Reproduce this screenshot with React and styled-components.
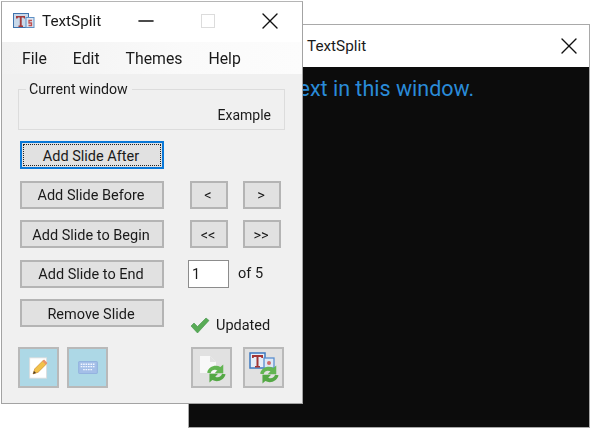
import React from 'react'
import styled, { createGlobalStyle } from 'styled-components'
import { FiX, FiMinus } from 'react-icons/fi'

const GlobalStyle = createGlobalStyle`
  html, body {
    margin: 0;
    padding: 0;
    background: #fff;
    overflow: hidden;
  }
`

const Desktop = styled.div`
  position: relative;
  width: 591px;
  height: 429px;
  font-family: Roboto, 'Open Sans', sans-serif;
  color: #1a1a1a;
  overflow: hidden;
  filter: blur(0.35px);
`

const BackWindow = styled.section`
  position: absolute;
  left: 188px;
  top: 24px;
  width: 402px;
  height: 404px;
  box-sizing: border-box;
  border: 1px solid #a9a9a9;
  display: flex;
  flex-direction: column;
`

const FrontWindow = styled.section`
  position: absolute;
  left: 1px;
  top: 1px;
  width: 302px;
  height: 403px;
  box-sizing: border-box;
  border: 1px solid #a3a3a3;
  border-top-color: #b5b5b5;
  background: #f0f0f0;
  display: flex;
  flex-direction: column;
`

const BackTitle = styled.header`
  height: 42px;
  flex: none;
  box-sizing: border-box;
  background: #fff;
  display: flex;
  align-items: center;
  justify-content: space-between;
  padding: 0 6px 1px 118px;
  font-size: 15.3px;
`

const Screen = styled.div`
  flex: 1;
  background: #0c0c0c;
  color: #2a8bd8;
  font-size: 21.5px;
  padding: 9px 0 0 15px;
  white-space: nowrap;
`

const TitleBar = styled.header`
  height: 40px;
  flex: none;
  box-sizing: border-box;
  background: #fff;
  display: flex;
  align-items: center;
  padding: 0 0 2px 11px;
  font-size: 15.3px;
`

const TitleText = styled.span`
  flex: none;
  margin-left: 7px;
  width: 73px;
  white-space: nowrap;
`

const Caption = styled.span`
  flex: none;
  display: flex;
  align-items: center;
  justify-content: center;
  width: 62px;
  color: #111;
`

const DisabledSquare = styled.i`
  display: block;
  width: 12px;
  height: 12px;
  border: 1px solid #dcdcdc;
`

const MenuBar = styled.nav`
  height: 32px;
  flex: none;
  display: flex;
  align-items: center;
  gap: 26px;
  padding-left: 20px;
  background: linear-gradient(to right, #f1f1f1, #fafafa 60%, #fcfcfc);
  font-size: 15.8px;
`

const Body = styled.div`
  flex: 1;
  display: flex;
  flex-direction: column;
  padding: 7px 17px 0 16px;
`

const Group = styled.fieldset`
  margin: 0;
  padding: 0 13px 0 0;
  height: 49px;
  box-sizing: border-box;
  border: 1px solid #dcdcdc;
  display: flex;
  align-items: center;
  justify-content: flex-end;
  font-size: 14.2px;
  legend {
    margin-left: 7px;
    padding: 0 4px 0 3px;
    line-height: 16px;
  }
  span {
    margin-top: 10px;
    font-size: 14px;
  }
`

const Controls = styled.div`
  margin: 11px 0 0 2px;
  display: grid;
  grid-template-columns: 144px 1fr;
  column-gap: 26px;
  grid-template-rows: repeat(5, 28px);
  row-gap: 11.5px;
`

const Button = styled.button`
  margin: 0;
  padding: 2px 2px 0 0;
  box-sizing: border-box;
  height: 28px;
  width: ${p => p.$width || 144}px;
  font: inherit;
  font-size: 14.5px;
  color: #1a1a1a;
  background: #e1e1e1;
  border: 2px solid ${p => (p.$focused ? '#0a78d7' : '#b4b4b4')};
  position: relative;
  ${p =>
    p.$focused &&
    `&::after {
      content: '';
      position: absolute;
      inset: 1px;
      border: 1px dotted #222;
    }`}
`

const Pair = styled.div`
  display: flex;
  gap: 15px;
`

const Counter = styled.div`
  display: flex;
  align-items: center;
  gap: 9px;
  margin-left: -2px;
  font-size: 14.5px;
`

const PageInput = styled.input`
  width: 41px;
  height: 28px;
  margin: 1px 0 0;
  padding: 0 0 0 3px;
  box-sizing: border-box;
  border: 1px solid #8c8c8c;
  background: #fff;
  font: inherit;
  color: #1a1a1a;
`

const Status = styled.div`
  display: flex;
  align-items: center;
  gap: 6px;
  font-size: 14.5px;
  align-self: end;
  margin-bottom: -7px;
`

const Tools = styled.div`
  margin-top: 20px;
  display: flex;
  gap: 8px;
`

const ToolButton = styled.button`
  padding: 0;
  width: 41px;
  height: 41px;
  box-sizing: border-box;
  border: 2px solid #b9b9b9;
  background: ${p => (p.$accent ? '#add8e6' : '#e1e1e1')};
  display: flex;
  align-items: center;
  justify-content: center;
  margin: 0 0 0 ${p => p.$gap || 0}px;
`

const AppIcon = () => (
  <svg width="22" height="16" viewBox="0 0 22 16">
    <rect x="0.5" y="0.5" width="15" height="14" fill="#c9d9ea" stroke="#3f73ad" />
    <rect x="13" y="4.5" width="8" height="10" fill="#dbe6f2" stroke="#5e8fc4" />
    <path d="M3 3h9v2.5H11L10.5 4.5H8.7v8h1.3V14H5.500v-1.500h1.300v-8H5L4.500 5.500H3z" fill="#a33a3a" />
    <path d="M19 7.500h-3v2.500h2.500v2.500h-3" fill="none" stroke="#c04f4f" strokeWidth="1.300" />
  </svg>
)

const Sync = ({ x = 0, y = 0, scale = 1 }) => (
  <g transform={`translate(${x} ${y}) scale(${scale})`} fill="#62b552">
    <path d="M1 7.500C2 2.500 8 0 12.500 2.500L15 0.500V8H7.500l2.500-2.500C7.500 4.500 5 5 4 8z" />
    <path d="M17 9C16 14 10 16.500 5.500 14L3 16V8.500h7.500l-2.500 2.500C10.500 12 13 11.500 14 8.500z" fill="#54a845" />
  </g>
)

const NoteIcon = () => (
  <svg width="22" height="22" viewBox="0 0 26 26">
    <rect x="2" y="1" width="20" height="24" fill="#fff" stroke="#dcdcdc" />
    <path d="M6 20l2-6L18 4l4 4L12 18z" fill="#f2c24a" stroke="#c98a2a" strokeWidth="0.800" />
    <path d="M17 5l2-2 4 4-2 2z" fill="#e9936b" />
    <path d="M6 20l1-3.500 2.500 2.500z" fill="#4a3a2a" />
  </svg>
)

const KeyboardIcon = () => (
  <svg width="22" height="13" viewBox="0 0 24 16">
    <rect x="0.500" y="0.500" width="23" height="15" rx="1" fill="#a4bfe8" stroke="#8dabdc" />
    <path d="M3 4h18M3 7h18M6 10.500h12" stroke="#f1f6ff" strokeWidth="1.600" strokeDasharray="2 1" />
  </svg>
)

const ReloadIcon = () => (
  <svg width="30" height="30" viewBox="0 0 30 30">
    <path d="M3 3h10l6 6v11H3z" fill="#f8f8f8" />
    <path d="M13 3v6h6z" fill="#e2e2e2" />
    <Sync x={9} y={11} scale={1.150} />
  </svg>
)

const ThemeIcon = () => (
  <svg width="32" height="32" viewBox="0 0 32 32">
    <rect x="2" y="1" width="15" height="15" fill="#e6eef7" stroke="#3d78c0" strokeWidth="1.500" />
    <rect x="16" y="6" width="10" height="10" fill="#dde8f5" stroke="#5b8fcf" strokeWidth="1.300" />
    <path d="M4 3h11v3h-1.500L13 5h-2.500v9H12v1.500H7V14h1.500V5H6l-.5 1H4z" fill="#a23535" />
    <circle cx="21" cy="11" r="2" fill="#d06a6a" />
    <Sync x={11} y={13} scale={1.150} />
  </svg>
)

const CheckIcon = () => (
  <svg width="20" height="17" viewBox="0 0 20 17">
    <path d="M1 9l3-3 3.500 3.500L16 1l3 2.500L7.500 16z" fill="#58ab55" stroke="#3f9148" strokeWidth="0.600" />
  </svg>
)

const App = () => {
  return (
    <>
      <GlobalStyle />
      <Desktop>
        <BackWindow>
          <BackTitle>
            <span>TextSplit</span>
            <FiX size={28} strokeWidth={1.200} color="#111" />
          </BackTitle>
          <Screen>Example text in this window.</Screen>
        </BackWindow>
        <FrontWindow>
          <TitleBar>
            <AppIcon />
            <TitleText>TextSplit</TitleText>
            <Caption><FiMinus size={24} strokeWidth={1.600} /></Caption>
            <Caption><DisabledSquare /></Caption>
            <Caption><FiX size={28} strokeWidth={1.200} /></Caption>
          </TitleBar>
          <MenuBar>
            <span>File</span>
            <span>Edit</span>
            <span>Themes</span>
            <span>Help</span>
          </MenuBar>
          <Body>
            <Group>
              <legend>Current window</legend>
              <span>Example</span>
            </Group>
            <Controls>
              <Button $focused>Add Slide After</Button>
              <div />
              <Button>Add Slide Before</Button>
              <Pair>
                <Button $width={38}>&lt;</Button>
                <Button $width={38}>&gt;</Button>
              </Pair>
              <Button>Add Slide to Begin</Button>
              <Pair>
                <Button $width={38}>&lt;&lt;</Button>
                <Button $width={38}>&gt;&gt;</Button>
              </Pair>
              <Button>Add Slide to End</Button>
              <Counter>
                <PageInput defaultValue="1" />
                <span>of 5</span>
              </Counter>
              <Button>Remove Slide</Button>
              <Status>
                <CheckIcon />
                <span>Updated</span>
              </Status>
            </Controls>
            <Tools>
              <ToolButton $accent><NoteIcon /></ToolButton>
              <ToolButton $accent><KeyboardIcon /></ToolButton>
              <ToolButton $gap={75}><ReloadIcon /></ToolButton>
              <ToolButton $gap={3}><ThemeIcon /></ToolButton>
            </Tools>
          </Body>
        </FrontWindow>
      </Desktop>
    </>
  )
}

export default App
